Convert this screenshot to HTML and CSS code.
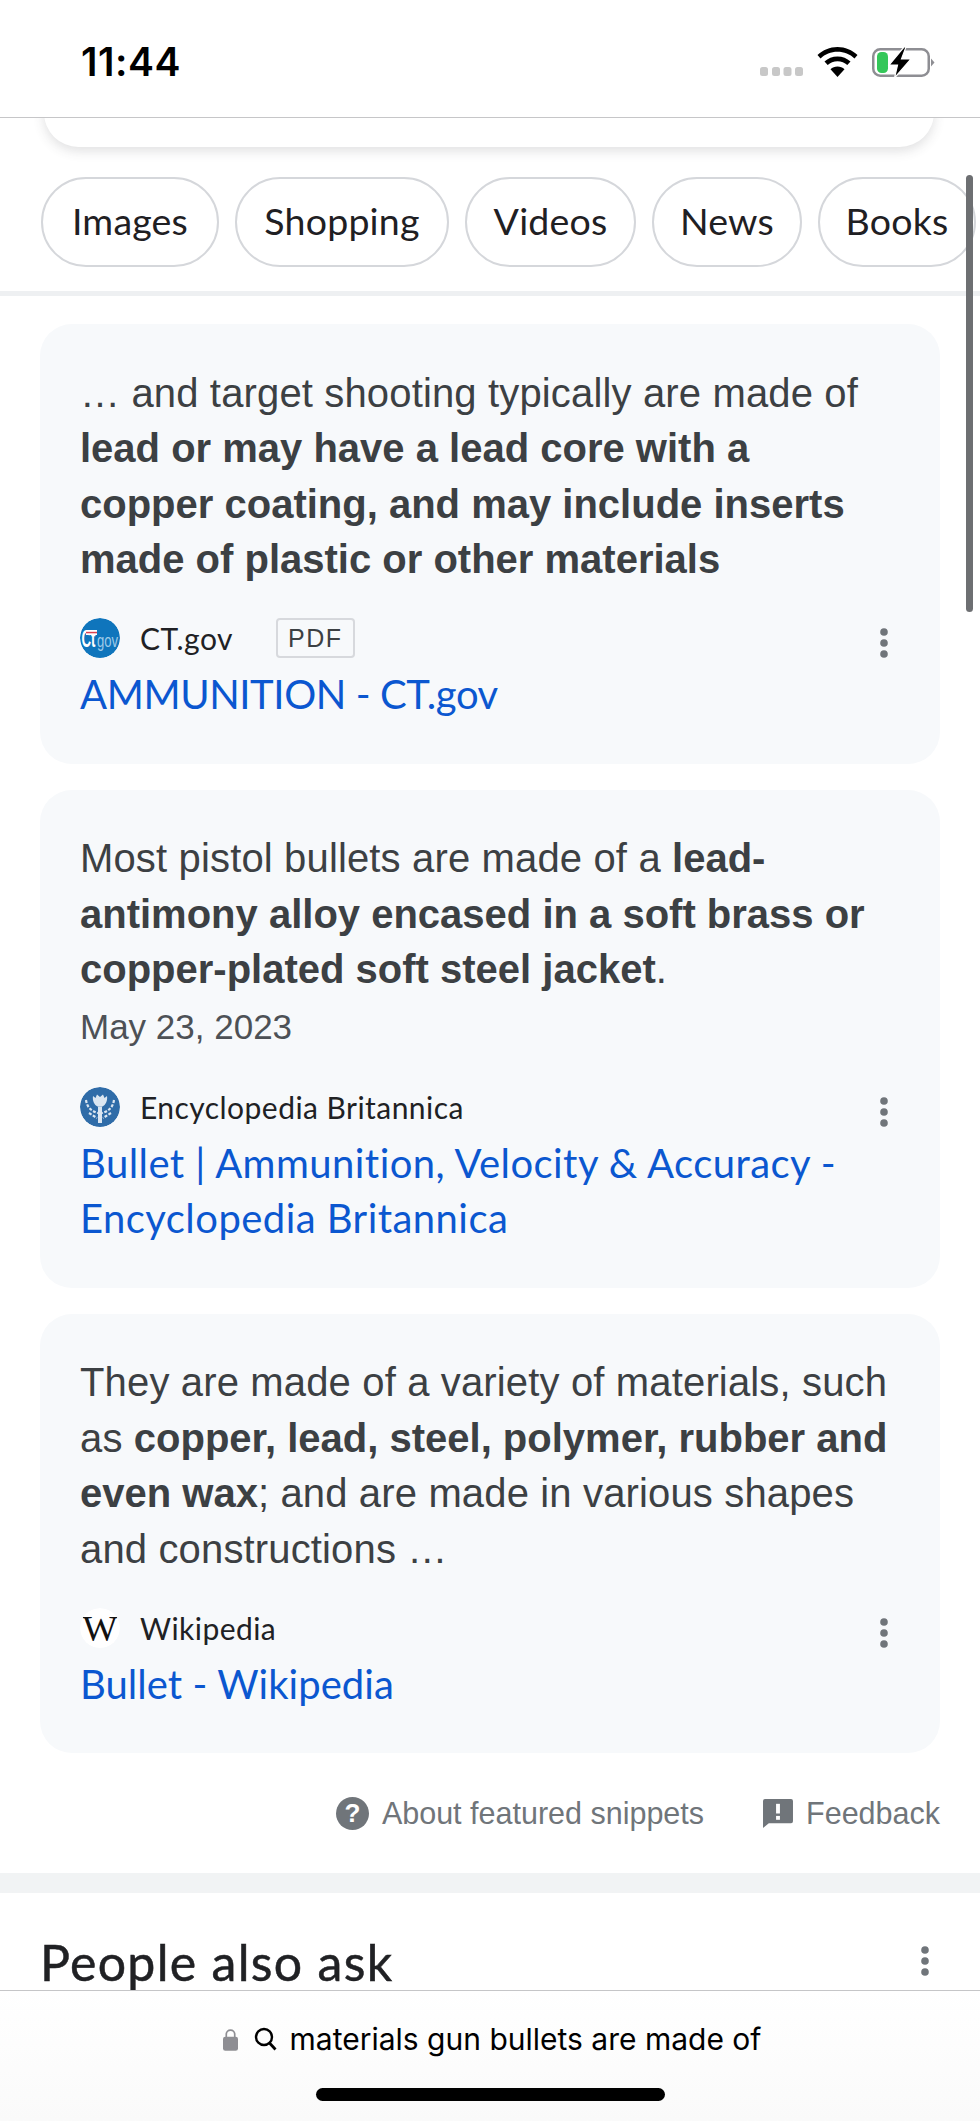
FILE: index.html
```html
<!DOCTYPE html>
<html lang="en">
<head>
<meta charset="utf-8">
<title>materials gun bullets are made of</title>
<link rel="stylesheet" href="styles.css">
</head>
<body>
<div class="phone">
  <header class="status">
    <span class="time">11:44</span>
    <div class="status-icons">
      <svg class="signal" width="43" height="9" viewBox="0 0 43 9"><rect x="0" y="0" width="8" height="9" rx="2.500"/><rect x="12" y="0" width="8" height="9" rx="2.500"/><rect x="23.500" y="0" width="8" height="9" rx="2.500"/><rect x="35" y="0" width="8" height="9" rx="2.500"/></svg>
      <svg class="wifi" width="41" height="30" viewBox="0 0 41 30"><path d="M20.500 0C28.200 0 35.200 3 40.500 8l-3 3.400C33 7.300 27 4.800 20.500 4.800S8 7.300 3.500 11.400L.5 8C5.800 3 12.800 0 20.500 0z"/><path d="M20.500 9.500c5 0 9.600 1.900 13 5.100l-3.200 3.500c-2.600-2.400-6-3.900-9.800-3.900s-7.200 1.500-9.800 3.900l-3.200-3.500c3.400-3.200 8-5.100 13-5.100z"/><path d="M20.500 19.500c2.700 0 5.200 1 7 2.700L20.500 30l-7-7.800c1.800-1.700 4.300-2.700 7-2.700z"/></svg>
      <svg class="battery" width="63" height="31" viewBox="0 0 63 31"><rect x="1.250" y="2.250" width="55.500" height="26.500" rx="7" fill="none" stroke="#8e8e93" stroke-width="2.500"/><rect x="5" y="5" width="11" height="21" rx="4.500" fill="#34c759"/><path d="M59 11.500l3.500 4-3.500 4z" fill="#8e8e93"/><path d="M32 0L17 18h8.500L22.500 31 39 12h-9.500L34 0z" fill="#000" stroke="#fff" stroke-width="1.200"/></svg>
    </div>
  </header>

  <main class="content">
    <div class="search-stub"></div>

    <nav class="chips">
      <span class="chip chip-images">Images</span>
      <span class="chip chip-shopping">Shopping</span>
      <span class="chip chip-videos">Videos</span>
      <span class="chip chip-news">News</span>
      <span class="chip chip-books">Books</span>
    </nav>
    <div class="scrollbar"></div>

    <div class="thin-divider"></div>

    <section class="cards">
      <article class="card">
        <p class="snippet">… and target shooting typically are made of <b>lead or may have a lead core with a copper coating, and may include inserts made of plastic or other materials</b></p>
        <div class="source">
          <svg class="favicon" viewBox="0 0 40 40"><circle cx="20" cy="20" r="20" fill="#0f75bc"/><text x="1.500" y="29" class="fav-ct" textLength="14" lengthAdjust="spacingAndGlyphs">Ct</text><text x="17" y="29" class="fav-gov" textLength="21" lengthAdjust="spacingAndGlyphs">gov</text><rect x="6" y="12" width="11" height="5" fill="#fff"/><rect x="6" y="13.800" width="11" height="1.500" fill="#d9414f"/></svg>
          <span class="source-name">CT.gov</span>
          <span class="pdf">PDF</span>
          <svg class="more" viewBox="0 0 10 30"><circle cx="5" cy="4" r="3.800"/><circle cx="5" cy="15" r="3.800"/><circle cx="5" cy="26" r="3.800"/></svg>
        </div>
        <a class="title title-caps">AMMUNITION - CT.gov</a>
      </article>

      <article class="card">
        <p class="snippet">Most pistol bullets are made of a <b>lead-antimony alloy encased in a soft brass or copper-plated soft steel jacket</b>.<br><span class="date">May 23, 2023</span></p>
        <div class="source source-gap">
          <svg class="favicon" viewBox="0 0 40 40"><circle cx="20" cy="20" r="20" fill="#2f6ca8"/><path d="M13 9l2.500 2 1.500-3.500 3 2.500 3-2.500 1.500 3.500L27 9c.8 5-1.500 9-4.500 10.500h-5C14.500 18 12.200 14 13 9z" fill="#dbe6f1"/><path d="M18 19.500h4V36h-4z" fill="#dbe6f1"/><path d="M6 13c1 7 5 11 12 13M34 13c-1 7-5 11-12 13M9 26l8 5M31 26l-8 5" fill="none" stroke="#dbe6f1" stroke-width="2.200" stroke-dasharray="3 1.500"/></svg>
          <span class="source-name">Encyclopedia Britannica</span>
          <svg class="more" viewBox="0 0 10 30"><circle cx="5" cy="4" r="3.800"/><circle cx="5" cy="15" r="3.800"/><circle cx="5" cy="26" r="3.800"/></svg>
        </div>
        <a class="title">Bullet | Ammunition, Velocity &amp; Accuracy - Encyclopedia Britannica</a>
      </article>

      <article class="card">
        <p class="snippet">They are made of a variety of materials, such as <b>copper, lead, steel, polymer, rubber and even wax</b>; and are made in various shapes and constructions …</p>
        <div class="source">
          <svg class="favicon" viewBox="0 0 40 40"><circle cx="20" cy="20" r="20" fill="#fff"/><text x="20" y="33" class="fav-w" textLength="35" lengthAdjust="spacingAndGlyphs">W</text></svg>
          <span class="source-name">Wikipedia</span>
          <svg class="more" viewBox="0 0 10 30"><circle cx="5" cy="4" r="3.800"/><circle cx="5" cy="15" r="3.800"/><circle cx="5" cy="26" r="3.800"/></svg>
        </div>
        <a class="title title-short">Bullet - Wikipedia</a>
      </article>
    </section>

    <div class="feedback-row">
      <span class="feedback-item">
        <svg class="help-icon" width="33" height="33" viewBox="0 0 24 24"><path fill="#70757a" d="M12 0a12 12 0 1 0 0 24 12 12 0 0 0 0-24z"/><text x="12" y="18.500" class="help-q">?</text></svg>
        About featured snippets
      </span>
      <span class="feedback-item">
        <svg class="flag-icon" width="30" height="29" viewBox="0 0 31 30"><path fill="#70757a" d="M2 0h27a2 2 0 0 1 2 2v21a2 2 0 0 1-2 2H6l-6 5V2a2 2 0 0 1 2-2z"/><rect x="13.500" y="5" width="4" height="10" fill="#fff"/><rect x="13.500" y="17.500" width="4" height="4" fill="#fff"/></svg>
        Feedback
      </span>
    </div>

    <div class="thick-divider"></div>

    <section class="paa">
      <h2>People also ask</h2>
      <svg class="more" viewBox="0 0 10 30"><circle cx="5" cy="4" r="3.800"/><circle cx="5" cy="15" r="3.800"/><circle cx="5" cy="26" r="3.800"/></svg>
    </section>
  </main>

  <footer class="address">
    <div class="address-row">
      <svg class="lock" width="15" height="23" viewBox="0 0 16 24"><path d="M3.500 10V6.500a4.500 4.500 0 0 1 9 0V10" fill="none" stroke="#8e8e93" stroke-width="1.800"/><rect x="0" y="9" width="16" height="15" rx="2.500" fill="#8e8e93"/></svg>
      <svg class="mag" width="23" height="24" viewBox="0 0 23 24"><circle cx="10" cy="10" r="8" fill="none" stroke="#000" stroke-width="2.400"/><path d="M15.500 16l6 6.500" fill="none" stroke="#000" stroke-width="2.800"/></svg>
      <span class="url">materials gun bullets are made of</span>
    </div>
    <div class="home-indicator"></div>
  </footer>
</div>
</body>
</html>
```
FILE: styles.css
```css
* { box-sizing: border-box; }
html, body { margin: 0; padding: 0; background: #fff; }
.phone {
  width: 980px; height: 2121px; overflow: hidden; position: relative;
  display: flex; flex-direction: column;
  font-family: "Liberation Sans", Arial, sans-serif;
  font-variant-ligatures: none;
}
.status {
  height: 118px; flex: none; background: #fff; border-bottom: 1px solid #c6c6c8;
  position: relative; z-index: 2;
  display: flex; align-items: flex-start; justify-content: space-between;
  padding: 40px 45px 0 81px;
}
.time { font: 600 39px/44px Inter, "Liberation Sans", sans-serif; color: #000; letter-spacing: 0.5px; }
.status-icons { display: flex; align-items: flex-end; margin-top: 7px; }
.signal { fill: #c8c8c8; margin: 0 14px 2px 0; }
.wifi { margin: 0 14px 1px 0; }
.content { flex: 1; min-height: 0; overflow: hidden; position: relative; }
.search-stub {
  height: 69px; margin: -40px 46px 0 44px; background: #fff;
  border-radius: 40px;
  box-shadow: 0 4px 12px rgba(60,64,67,.16);
}
.chips {
  display: flex; gap: 16px; padding: 30px 0 0 41px; height: 144px; overflow: hidden; width: 980px;
}
.chip {
  flex: none; height: 90px; border: 2px solid #d5d7db; border-radius: 45px;
  display: flex; align-items: center; justify-content: center; padding-bottom: 3px;
  font: 400 37.500px/44px Lato, "Open Sans", sans-serif; letter-spacing: 0.2px; color: #1f2023;
}
.chip-images { width: 178px; }
.chip-shopping { width: 214px; }
.chip-videos { width: 171px; }
.chip-news { width: 150px; }
.chip-books { width: 158px; }
.scrollbar {
  position: absolute; left: 966px; top: 57px; width: 7px; height: 437px;
  border-radius: 4px; background: #6d6f72;
}
.thin-divider { height: 5px; background: #eef0f2; }
.cards { display: flex; flex-direction: column; gap: 26px; padding: 28px 40px 0; }
.card { background: #f7f9fb; border-radius: 32px; padding: 41.500px 40px 41px; }
.snippet { margin: 0; max-width: 809px; font-size: 40px; line-height: 55.500px; letter-spacing: 0.15px; color: #3c4043; }
.snippet b { letter-spacing: 0; color: #3c4043; }
.date { font-size: 35px; letter-spacing: 0; color: #4d5156; }
.source {
  display: flex; align-items: center; height: 40px; margin-top: 30.500px; position: relative;
}
.source-gap { margin-top: 32.500px; }
.favicon { width: 40px; height: 40px; flex: none; margin-right: 20px; border-radius: 50%; }
.fav-ct { font: 700 24px "Liberation Sans", sans-serif; fill: #fff; }
.fav-gov { font: 400 18px "Liberation Sans", sans-serif; fill: #9fcbe8; }
.fav-w { font: 400 36px "Liberation Serif", serif; fill: #111; text-anchor: middle; }
.source-name { font: 400 30px/38px Lato, sans-serif; letter-spacing: 0.45px; color: #202124; }
.pdf {
  margin-left: 43px; width: 79px; height: 40px; border: 2px solid #d7d9dd; border-radius: 4px;
  display: flex; align-items: center; justify-content: center;
  font: 400 25px/30px "Liberation Sans", sans-serif; letter-spacing: 1.500px; color: #3c4043;
}
.more { width: 10px; height: 30px; fill: #70757a; position: absolute; right: 11px; top: 10px; }
.title { display: block; font: 400 40px/55.500px Lato, sans-serif; letter-spacing: 0.45px; color: #0b57d0; margin-top: 9px; }
.title-caps { letter-spacing: -0.4px; }
.title-short { letter-spacing: 0.05px; }
.feedback-row {
  display: flex; justify-content: flex-end; gap: 59px; padding: 40px 40px 0;
  height: 120px;
}
.feedback-item {
  display: flex; align-items: center; gap: 13px; height: 40px;
  font-size: 30.500px; line-height: 38px; color: #70757a;
}
.help-q { font: 700 19px "Liberation Sans", sans-serif; fill: #fff; text-anchor: middle; }
.thick-divider { height: 20px; background: #f1f3f4; }
.paa { position: relative; height: 100px; padding: 41px 40px 0 40px; }
.paa h2 { margin: 0; font: 400 50px/56px Lato, sans-serif; letter-spacing: 1.300px; -webkit-text-stroke: 0.5px #202124; color: #202124; }
.paa .more { right: 50px; top: 53px; }
.address {
  height: 131px; flex: none; background: linear-gradient(#fff, #fafafa); border-top: 1px solid #c6c6c8;
  position: relative; z-index: 2;
}
.address-row {
  display: flex; align-items: center; justify-content: center; height: 50px; margin-top: 23px; padding-left: 4px;
  font: 400 30px/40px Inter, sans-serif; color: #000;
}
.lock { margin-right: 16px; }
.mag { margin-right: 13px; }
.home-indicator {
  width: 349px; height: 13px; border-radius: 7px; background: #000; margin: 24px auto 0;
}
```
